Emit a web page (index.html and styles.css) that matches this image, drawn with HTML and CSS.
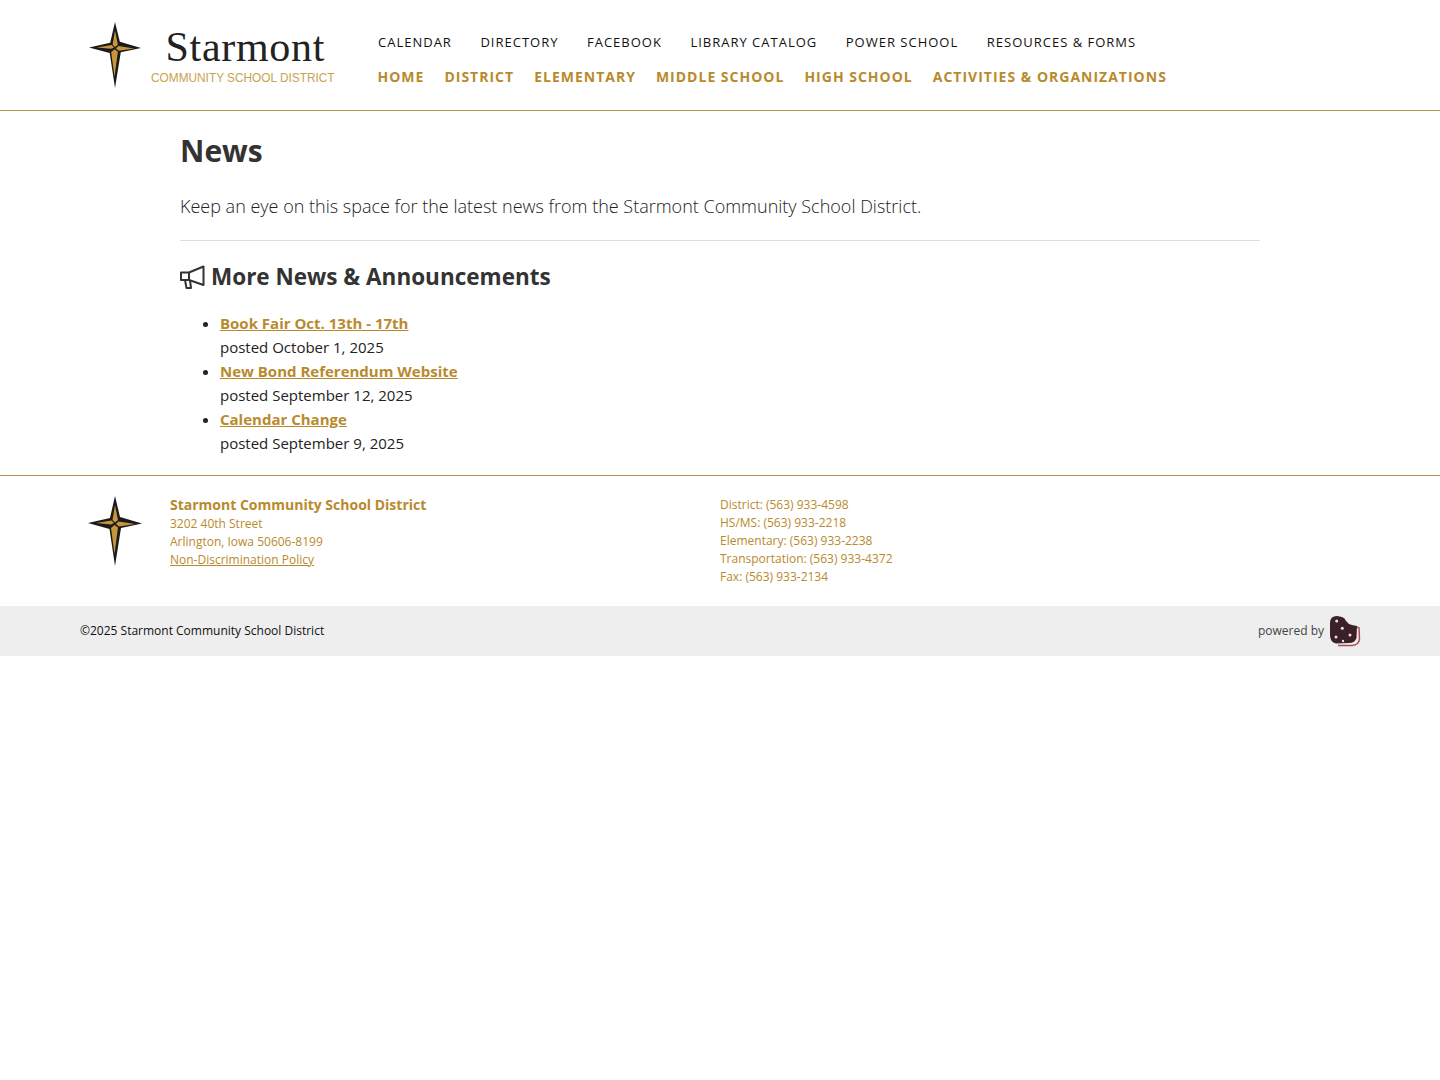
FILE: index.html
```html
<!DOCTYPE html>
<html>
<head>
  <title>News - Starmont Community School District</title>
  <link rel="stylesheet" href="styles.css">
</head>
<body>
  <header class="site-header">
    <a class="logo" href="#">
      <svg class="star star-top" viewBox="0 0 54 70" preserveAspectRatio="none">
        <path d="M27 0 L32 21 L54 27.500 L33 32 L27 70 L21.500 33 L0 27 L22 22 Z" fill="#1a1a1a"/>
        <path d="M27 9 L30 24 L27 26.500 L24.500 24 Z M8 27 L23.500 24.500 L26 27 L23 28.500 Z M47 28 L30.500 25.500 L28 28 L31 30.500 Z M26.500 58 L23 32 L26.500 29 L30 31.500 Z" fill="#c8963a"/>
      </svg>
      <span class="logo-text">
        <span class="logo-name">Starmont</span>
        <span class="logo-sub">COMMUNITY SCHOOL DISTRICT</span>
      </span>
    </a>
    <nav class="nav">
      <ul class="nav-top">
        <li><a href="#">Calendar</a></li>
        <li><a href="#">Directory</a></li>
        <li><a href="#">Facebook</a></li>
        <li><a href="#">Library Catalog</a></li>
        <li><a href="#">Power School</a></li>
        <li><a href="#">Resources &amp; Forms</a></li>
      </ul>
      <ul class="nav-main">
        <li><a href="#">Home</a></li>
        <li><a href="#">District</a></li>
        <li><a href="#">Elementary</a></li>
        <li><a href="#">Middle School</a></li>
        <li><a href="#">High School</a></li>
        <li><a href="#">Activities &amp; Organizations</a></li>
      </ul>
    </nav>
  </header>

  <main class="content">
    <h1>News</h1>
    <p class="lead">Keep an eye on this space for the latest news from the Starmont Community School District.</p>
    <hr>
    <h2>
      <svg class="icon-bullhorn" viewBox="0 0 25 24" fill="none" stroke="#333" stroke-width="2" stroke-linejoin="round">
        <path d="M1 7.500 L9 7.500 L23.500 1.500 L23.500 20 L9 15 L1 15 Z"/>
        <path d="M9 7.500 L9 15"/>
        <path d="M5 15 L6.500 23 L11 23 L10 15.500"/>
      </svg>
      More News &amp; Announcements
    </h2>
    <ul class="news-list">
      <li><a href="#">Book Fair Oct. 13th - 17th</a><br>posted October 1, 2025</li>
      <li><a href="#">New Bond Referendum Website</a><br>posted September 12, 2025</li>
      <li><a href="#">Calendar Change</a><br>posted September 9, 2025</li>
    </ul>
  </main>

  <footer class="site-footer">
    <div class="footer-main">
      <svg class="star star-foot" viewBox="0 0 54 70">
        <path d="M27 0 L32 21 L54 27.500 L33 32 L27 70 L21.500 33 L0 27 L22 22 Z" fill="#1a1a1a"/>
        <path d="M27 9 L30 24 L27 26.500 L24.500 24 Z M8 27 L23.500 24.500 L26 27 L23 28.500 Z M47 28 L30.500 25.500 L28 28 L31 30.500 Z M26.500 58 L23 32 L26.500 29 L30 31.500 Z" fill="#c8963a"/>
      </svg>
      <div class="footer-address">
        <strong>Starmont Community School District</strong>
        <span>3202 40th Street</span>
        <span>Arlington, Iowa 50606-8199</span>
        <a href="#">Non-Discrimination Policy</a>
      </div>
      <div class="footer-phones">
        <span>District: (563) 933-4598</span>
        <span>HS/MS: (563) 933-2218</span>
        <span>Elementary: (563) 933-2238</span>
        <span>Transportation: (563) 933-4372</span>
        <span>Fax: (563) 933-2134</span>
      </div>
    </div>
    <div class="footer-bar">
      <span class="copyright">©2025 Starmont Community School District</span>
      <span class="powered">
        powered by
        <svg class="cookie" viewBox="0 0 30 30">
          <path d="M27 11 L29 12 L29.500 23 Q29 29 22 29.500 L8 29.500" fill="none" stroke="#b04a5a" stroke-width="1.500"/>
          <path d="M0 7 Q0 0 7 0 L12 1 Q15 2 16 5 Q18 8 22 9 L27 10 L26.500 22 Q25 27 19 27 L6 27.500 Q0 26 0 19 Z" fill="#3a2028"/>
          <circle cx="6.700" cy="5" r="1.500" fill="#e8e0e0"/>
          <circle cx="12.300" cy="12.300" r="1.500" fill="#e8e0e0"/>
          <circle cx="20" cy="19" r="1.500" fill="#e8e0e0"/>
          <circle cx="6" cy="21" r="1.500" fill="#e8e0e0"/>
          <circle cx="13" cy="25" r="1.200" fill="#e8e0e0"/>
        </svg>
      </span>
    </div>
  </footer>
</body>
</html>
```
FILE: styles.css
```css
body {
  margin: 0;
  font-family: "Open Sans", sans-serif;
  font-size: 15px;
  line-height: 24px;
  color: #222;
  background: #fff;
}
a {
  color: #b98a2d;
}
.site-header {
  display: flex;
  align-items: flex-start;
  height: 110px;
  padding: 0 80px;
  border-bottom: 1px solid #b8944a;
}
.logo {
  display: flex;
  align-items: flex-start;
  flex-shrink: 0;
  width: 297.500px;
  padding: 22px 0 0 9px;
  box-sizing: border-box;
  text-decoration: none;
}
.star {
  display: block;
  flex-shrink: 0;
}
.star-top {
  width: 52px;
  height: 66px;
}
.logo-text {
  display: flex;
  flex-direction: column;
  align-items: center;
  margin-left: 10px;
  margin-top: 1px;
}
.logo-name {
  margin-left: 5px;
  font-family: "Liberation Serif", serif;
  font-size: 42px;
  line-height: 48px;
  letter-spacing: 0.700px;
  color: #222;
}
.logo-sub {
  font-family: "Liberation Sans", sans-serif;
  font-size: 11.850px;
  line-height: 14px;
  color: #c9a24f;
  white-space: nowrap;
}
.nav ul {
  display: flex;
  list-style: none;
  margin: 0;
  padding: 0;
}
.nav a {
  text-decoration: none;
  text-transform: uppercase;
  white-space: nowrap;
}
.nav-top {
  gap: 28.500px;
  margin-top: 30px !important;
  padding-left: 0.500px !important;
  font-size: 13px;
  letter-spacing: 1px;
}
.nav-top a {
  color: #111;
}
.nav-main {
  gap: 20px;
  margin-top: 11px !important;
  font-size: 14px;
  font-weight: 700;
  letter-spacing: 1px;
}
.content {
  width: 1080px;
  margin: 0 auto;
  padding-bottom: 20px;
}
h1 {
  margin: 0;
  padding-top: 19px;
  font-size: 30px;
  line-height: 42px;
  font-weight: 700;
  color: #333;
}
.lead {
  margin: 21px 0 0;
  font-size: 18px;
  line-height: 27px;
  font-weight: 300;
}
hr {
  margin: 20px 0 0;
  border: none;
  border-top: 1px solid #ddd;
}
h2 {
  display: flex;
  align-items: center;
  gap: 6px;
  margin: 20px 0 0;
  font-size: 22.500px;
  line-height: 32px;
  font-weight: 700;
  color: #333;
}
.icon-bullhorn {
  width: 25px;
  height: 24px;
  flex-shrink: 0;
}
.news-list {
  margin: 18px 0 0;
  padding-left: 40px;
}
.news-list a {
  font-weight: 700;
}
.site-footer {
  border-top: 1px solid #b8944a;
}
.footer-main {
  display: flex;
  align-items: flex-start;
  height: 130px;
  padding: 20px 80px 0;
  box-sizing: border-box;
  font-size: 12px;
  line-height: 18px;
  color: #b98a2d;
}
.star-foot {
  width: 54px;
  height: 70px;
  margin-left: 8px;
}
.footer-address,
.footer-phones {
  display: flex;
  flex-direction: column;
  align-items: flex-start;
}
.footer-address {
  width: 550px;
  margin-left: 28px;
}
.footer-address strong {
  font-size: 14px;
  margin-bottom: 1px;
}
.site-footer span {
  display: block;
}
.footer-bar {
  display: flex;
  align-items: center;
  justify-content: space-between;
  height: 50px;
  padding: 0 80px;
  background: #eee;
  font-size: 12px;
}
.copyright {
  color: #111;
}
.site-footer .powered {
  display: flex;
  align-items: center;
  gap: 6px;
  color: #444;
}
.cookie {
  width: 30px;
  height: 30px;
  overflow: visible;
}
```
